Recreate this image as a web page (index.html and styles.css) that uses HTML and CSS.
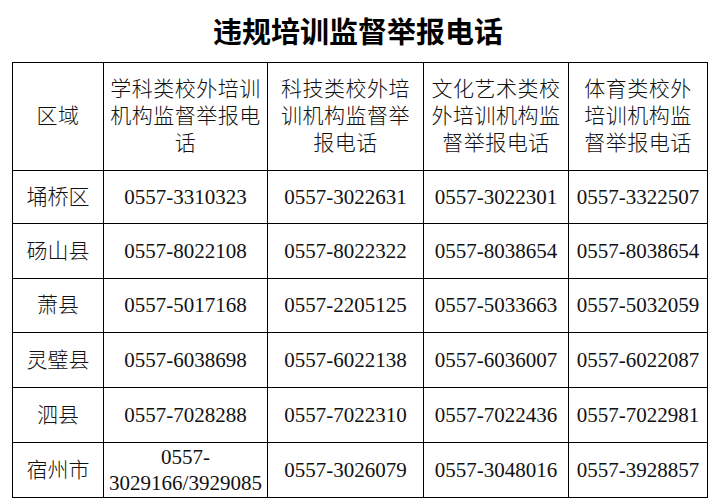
FILE: index.html
```html
<!DOCTYPE html>
<html lang="zh-CN">
<head>
<meta charset="utf-8">
<title>违规培训监督举报电话</title>
<link rel="stylesheet" href="styles.css">
</head>
<body>
<h1 class="title">违规培训监督举报电话</h1>
<table class="hotline">
  <colgroup>
    <col class="c1"><col class="c2"><col class="c3"><col class="c4"><col class="c5">
  </colgroup>
  <thead>
    <tr class="head">
      <th>区域</th>
      <th>学科类校外培训<br>机构监督举报电<br>话</th>
      <th>科技类校外培<br>训机构监督举<br>报电话</th>
      <th>文化艺术类校<br>外培训机构监<br>督举报电话</th>
      <th>体育类校外<br>培训机构监<br>督举报电话</th>
    </tr>
  </thead>
  <tbody>
    <tr class="r1"><td>埇桥区</td><td>0557-3310323</td><td>0557-3022631</td><td>0557-3022301</td><td>0557-3322507</td></tr>
    <tr class="r2"><td>砀山县</td><td>0557-8022108</td><td>0557-8022322</td><td>0557-8038654</td><td>0557-8038654</td></tr>
    <tr class="r3"><td>萧县</td><td>0557-5017168</td><td>0557-2205125</td><td>0557-5033663</td><td>0557-5032059</td></tr>
    <tr class="r4"><td>灵璧县</td><td>0557-6038698</td><td>0557-6022138</td><td>0557-6036007</td><td>0557-6022087</td></tr>
    <tr class="r5"><td>泗县</td><td>0557-7028288</td><td>0557-7022310</td><td>0557-7022436</td><td>0557-7022981</td></tr>
    <tr class="r6"><td>宿州市</td><td class="two">0557-<br>3029166/3929085</td><td>0557-3026079</td><td>0557-3048016</td><td>0557-3928857</td></tr>
  </tbody>
</table>
</body>
</html>
```
FILE: styles.css
```css
html, body {
  margin: 0;
  padding: 0;
  background: #fff;
}
body {
  width: 716px;
  font-family: "Liberation Serif", "Noto Sans CJK SC", serif;
  color: #111;
}
.title {
  margin: 10px 0 12px 0;
  height: 40px;
  line-height: 40px;
  font-family: "Noto Sans CJK SC", sans-serif;
  font-weight: 700;
  font-size: 29px;
  text-align: center;
  color: #000;
}
.hotline {
  margin-left: 12px;
  width: 695px;
  border-collapse: collapse;
  table-layout: fixed;
  font-size: 21px;
  font-weight: 300;
}
.c1 { width: 91px; }
.c2 { width: 164px; }
.c3 { width: 156px; }
.c4 { width: 145px; }
.c5 { width: 139px; }
.hotline th,
.hotline td {
  border: 1px solid #000;
  padding: 0;
  text-align: center;
  vertical-align: middle;
  font-weight: 300;
  line-height: 27px;
  white-space: nowrap;
}
.head th { height: 107px; letter-spacing: 0.5px; }
.r1 td { height: 52px; }
.r2 td { height: 54px; }
.r3 td { height: 53px; }
.r4 td { height: 54px; }
.r5 td { height: 54px; }
.r6 td { height: 54px; }
.hotline td.two { line-height: 26px; }
```
